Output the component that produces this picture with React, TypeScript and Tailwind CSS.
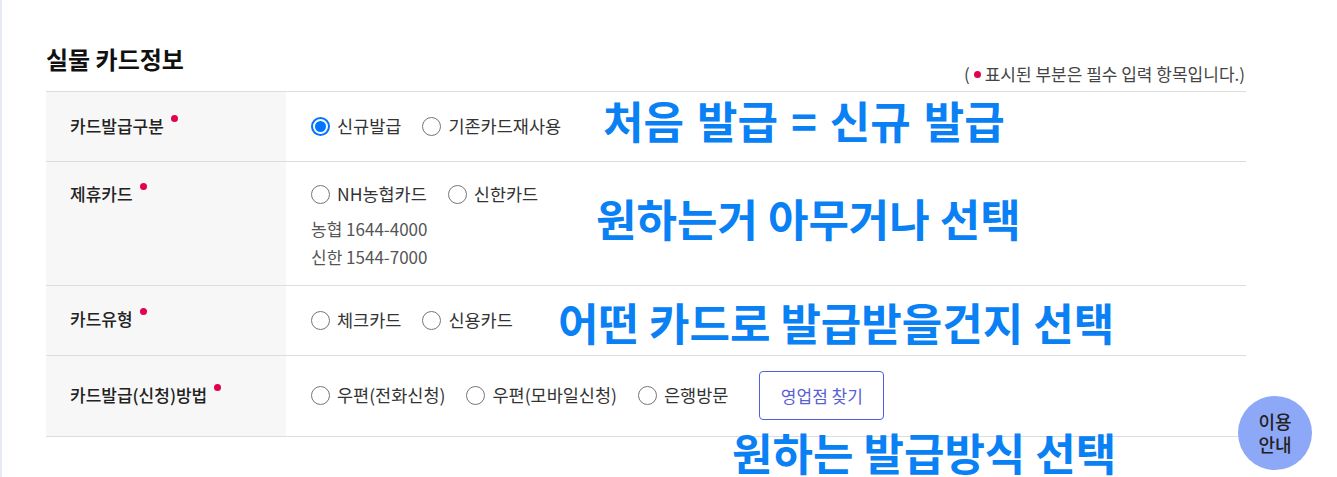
import React from "react";

const FONT = { fontFamily: '"Noto Sans CJK KR", "Noto Sans", sans-serif' };

function Dot() {
  return <span className="inline-block w-[7px] h-[7px] rounded-full bg-[#e2004f]" />;
}

function Label({ text, pt = "pt-[15px]" }: { text: string; pt?: string }) {
  return (
    <div className={`bg-[#f7f7f7] pl-[24px] ${pt}`}>
      <div className="flex items-start leading-[38px] text-[17px] font-medium text-[#222]">
        <span>{text}</span>
        <span className="ml-[7px] mt-[8px] flex">
          <Dot />
        </span>
      </div>
    </div>
  );
}

function Radio({ label, checked = false }: { label: string; checked?: boolean }) {
  return (
    <div className="flex items-center gap-[7px] text-[17.5px] text-[#333] mr-[21px]">
      {checked ? (
        <span className="w-[19px] h-[19px] rounded-full border-2 border-[#0075ff] flex items-center justify-center bg-white">
          <span className="w-[11px] h-[11px] rounded-full bg-[#0075ff]" />
        </span>
      ) : (
        <span className="w-[19px] h-[19px] rounded-full border-[1.5px] border-[#767676] bg-white" />
      )}
      <span>{label}</span>
    </div>
  );
}

export default function App() {
  return (
    <div className="relative min-h-[477px] h-[477px] overflow-hidden bg-white border-l-2 border-[#e6eaf2]" style={FONT}>
      <div className="ml-[44px] w-[1200px] pt-[43px]">
        <div className="flex justify-between">
          <h2 className="text-[24px] font-bold leading-[32px] text-[#111]">실물 카드정보</h2>
          <p className="mt-[20px] leading-[22px] text-[17px] text-[#444] flex items-center mr-[1px]">
            <span>(</span>
            <span className="mx-[4px] flex">
              <Dot />
            </span>
            <span>표시된 부분은 필수 입력 항목입니다.)</span>
          </p>
        </div>
        <div className="mt-[6px] border-t border-[#dddddd]">
          {/* row 1 */}
          <div className="grid grid-cols-[240px_1fr] border-b border-[#dddddd] h-[70px]">
            <Label text="카드발급구분" />
            <div className="pl-[25px] pt-[16px]">
              <div className="flex items-center h-[37px]">
                <Radio label="신규발급" checked />
                <Radio label="기존카드재사용" />
              </div>
            </div>
          </div>
          {/* row 2 */}
          <div className="grid grid-cols-[240px_1fr] border-b border-[#dddddd] h-[124px]">
            <Label text="제휴카드" pt="pt-[13px]" />
            <div className="pl-[25px] pt-[14px]">
              <div className="flex items-center h-[37px]">
                <Radio label="NH농협카드" />
                <Radio label="신한카드" />
              </div>
              <div className="mt-[2px] text-[17px] leading-[28px] text-[#555]">
                <div>농협 1644-4000</div>
                <div>신한 1544-7000</div>
              </div>
            </div>
          </div>
          {/* row 3 */}
          <div className="grid grid-cols-[240px_1fr] border-b border-[#dddddd] h-[70px]">
            <Label text="카드유형" pt="pt-[14px]" />
            <div className="pl-[25px] pt-[16px]">
              <div className="flex items-center h-[37px]">
                <Radio label="체크카드" />
                <Radio label="신용카드" />
              </div>
            </div>
          </div>
          {/* row 4 */}
          <div className="grid grid-cols-[240px_1fr] border-b border-[#dddddd] h-[81px]">
            <Label text="카드발급(신청)방법" pt="pt-[20px]" />
            <div className="pl-[25px] pt-[15px]">
              <div className="flex items-center h-[49px]">
                <Radio label="우편(전화신청)" />
                <Radio label="우편(모바일신청)" />
                <Radio label="은행방문" />
                <button className="ml-[10px] h-[49px] w-[125px] rounded-[4px] border border-[#4f5fe0] text-[17px] text-[#5a5fd6] bg-white">
                  영업점 찾기
                </button>
              </div>
            </div>
          </div>
        </div>
      </div>

      {/* annotations */}
      <span className="absolute left-[601px] top-[98px] whitespace-nowrap text-[44px] leading-[44px] font-bold text-[#0a80f5] [word-spacing:3px]">
        처음 발급 = 신규 발급
      </span>
      <span className="absolute left-[594px] top-[196px] whitespace-nowrap text-[44px] leading-[44px] font-bold text-[#0a80f5]">
        원하는거 아무거나 선택
      </span>
      <span className="absolute left-[556px] top-[300px] whitespace-nowrap text-[44px] leading-[44px] font-bold text-[#0a80f5]">
        어떤 카드로 발급받을건지 선택
      </span>
      <span className="absolute left-[730px] top-[430px] whitespace-nowrap text-[44px] leading-[44px] font-bold text-[#0a80f5]">
        원하는 발급방식 선택
      </span>

      {/* floating guide button */}
      <div className="absolute left-[1236px] top-[396px] w-[74px] h-[74px] rounded-full bg-[#8ea8f8] flex flex-col items-center justify-center text-[18px] leading-[23px] font-medium text-[#222]">
        <span>이용</span>
        <span>안내</span>
      </div>
    </div>
  );
}
